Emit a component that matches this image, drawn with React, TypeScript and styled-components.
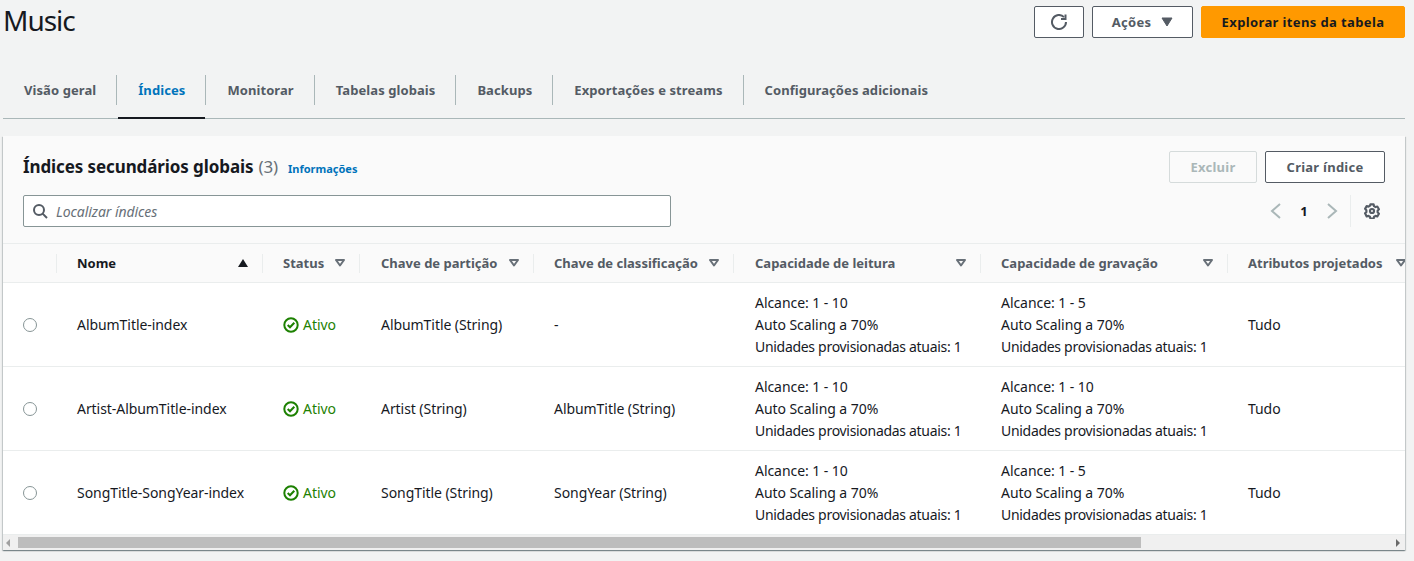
import React, { FC } from 'react';
import styled, { createGlobalStyle } from 'styled-components';

const GlobalStyle = createGlobalStyle`
  html, body {
    margin: 0;
    padding: 0;
    background: #f2f3f3;
    color: #16191f;
    font-family: "Noto Sans", "Open Sans", sans-serif;
    font-size: 14px;
    line-height: 22px;
  }
  * {
    box-sizing: border-box;
  }
`;

const Page = styled.div`
  width: 1414px;
  height: 561px;
  padding: 6px 9px 0 3px;
  overflow: hidden;
`;

const PageHeader = styled.header`
  display: flex;
  justify-content: space-between;
  align-items: flex-start;
  height: 69px;
`;

const Title = styled.h1`
  margin: -6px 0 0;
  font-size: 28px;
  line-height: 40px;
  font-weight: 400;
  letter-spacing: -1px;
`;

const Actions = styled.div`
  display: flex;
  gap: 8px;
`;

const Button = styled.button<{ $variant?: 'normal' | 'primary' | 'disabled'; $width: number }>`
  display: flex;
  align-items: center;
  justify-content: center;
  gap: 10px;
  width: ${(p) => p.$width}px;
  height: 32px;
  padding: 0;
  border-radius: 2px;
  border: 1px solid
    ${(p) =>
      p.$variant === 'primary' ? '#ff9900' : p.$variant === 'disabled' ? '#d5dbdb' : '#545b64'};
  background: ${(p) =>
    p.$variant === 'primary' ? '#ff9900' : p.$variant === 'disabled' ? '#fafafa' : '#ffffff'};
  color: ${(p) =>
    p.$variant === 'primary' ? '#16191f' : p.$variant === 'disabled' ? '#aab7b8' : '#545b64'};
  font: 700 13px/20px "Noto Sans", sans-serif;
  letter-spacing: ${(p) => (p.$variant === 'primary' ? '0.38px' : '0.25px')};
`;

const Tabs = styled.nav`
  display: flex;
  height: 44px;
  border-bottom: 1px solid #aab7b8;
`;

const Tab = styled.div`
  height: 44px;
`;

const TabLabel = styled.span<{ $active?: boolean; $first?: boolean }>`
  display: flex;
  align-items: center;
  height: 30px;
  padding: 0 20px 0 21px;
  border-left: ${(p) => (p.$first ? '0' : '1px solid #aab7b8')};
  color: ${(p) => (p.$active ? '#0073bb' : '#545b64')};
  font-size: 13px;
  font-weight: 700;
  letter-spacing: 0.08px;
`;

const ActiveTab = styled(Tab)`
  position: relative;
  &::after {
    content: '';
    position: absolute;
    left: 2px;
    right: 0;
    bottom: 0;
    height: 2px;
    background: #16191f;
  }
`;

const Card = styled.section`
  margin-top: 17px;
  height: 414px;
  background: #ffffff;
  box-shadow: 0 1px 1px 0 rgba(0, 28, 36, 0.3), 1px 1px 1px 0 rgba(0, 28, 36, 0.15),
    -1px 1px 1px 0 rgba(0, 28, 36, 0.15);
  overflow: hidden;
`;

const CardHead = styled.div`
  height: 108px;
  padding: 15px 20px 0;
  background: #fafafa;
  border-bottom: 1px solid #eaeded;
`;

const HeadRow = styled.div`
  display: flex;
  justify-content: space-between;
  align-items: flex-start;
  height: 44px;
`;

const Heading = styled.div`
  display: flex;
  align-items: baseline;
  gap: 10px;
  height: 32px;
  line-height: 32px;
`;

const HeadingText = styled.h2`
  margin: 0;
  font-size: 17px;
  font-weight: 700;
  letter-spacing: -0.1px;
`;

const Count = styled.span`
  margin-left: 5px;
  color: #687078;
  font-weight: 400;
`;

const InfoLink = styled.a`
  color: #0073bb;
  font-size: 11px;
  font-weight: 700;
`;

const FilterRow = styled.div`
  display: flex;
  justify-content: space-between;
  align-items: center;
`;

const SearchBox = styled.div`
  display: flex;
  align-items: center;
  gap: 8px;
  width: 648px;
  height: 32px;
  padding-left: 8px;
  background: #ffffff;
  border: 1px solid #879596;
  border-radius: 2px;
`;

const Placeholder = styled.span`
  margin-top: 2px;
  color: #687078;
  font-style: italic;
  font-size: 14px;
  letter-spacing: -0.06px;
`;

const Pager = styled.div`
  display: flex;
  align-items: center;
  height: 32px;
  padding-right: 5px;
`;

const PageNumber = styled.span`
  width: 40px;
  text-align: center;
  font-size: 13px;
  font-weight: 700;
`;

const PagerDivider = styled.div`
  width: 1px;
  height: 32px;
  margin: 0 13px 0 10px;
  background: #eaeded;
`;

const COLUMNS = '53px 206px 97px 174px 200px 247px 247px 193px';

const TableWrap = styled.div`
  width: 100%;
  height: 291px;
  overflow: hidden;
`;

const HeaderRow = styled.div`
  display: grid;
  grid-template-columns: ${COLUMNS};
  align-items: center;
  height: 39px;
  background: #fafafa;
  border-bottom: 1px solid #eaeded;
`;

const HeaderCell = styled.div<{ $sorted?: boolean; $indent: number }>`
  display: flex;
  align-items: center;
  justify-content: space-between;
  height: 19px;
  padding: 0 14px 0 ${(p) => p.$indent - 1}px;
  border-left: 1px solid #eaeded;
  color: ${(p) => (p.$sorted ? '#16191f' : '#545b64')};
  font-size: 13px;
  font-weight: 700;
  white-space: nowrap;
`;

const EmptyHeader = styled.div``;

const Row = styled.div`
  display: grid;
  grid-template-columns: ${COLUMNS};
  align-items: center;
  height: 84px;
  border-bottom: 1px solid #eaeded;
  letter-spacing: -0.06px;
`;

const Cell = styled.div<{ $indent: number }>`
  padding-left: ${(p) => p.$indent}px;
  white-space: nowrap;
`;

const TightLine = styled.span`
  letter-spacing: -0.3px;
`;

const RadioCell = styled.div`
  padding-left: 20px;
  display: flex;
`;

const Radio = styled.span`
  width: 14px;
  height: 14px;
  border: 1px solid #879596;
  border-radius: 50%;
  background: #ffffff;
`;

const Status = styled.span`
  display: flex;
  align-items: center;
  gap: 4px;
  color: #1d8102;
`;

const Scrollbar = styled.div`
  display: flex;
  align-items: center;
  height: 15px;
  padding: 0 5px 0 3px;
  background: #f0f0f0;
`;

const Arrow = styled.span<{ $right?: boolean }>`
  width: 0;
  height: 0;
  border-top: 4px solid transparent;
  border-bottom: 4px solid transparent;
  ${(p) => (p.$right ? 'border-left: 4px solid #6a6a6a;' : 'border-right: 4px solid #a0a0a0;')}
`;

const Track = styled.div`
  flex: 1;
  padding-left: 8px;
`;

const Thumb = styled.div`
  width: 1123px;
  height: 11px;
  background: #bdbdbd;
`;

const RefreshIcon: FC = () => (
  <svg width="16" height="16" viewBox="0 0 16 16" fill="none" stroke="#545b64" strokeWidth="2">
    <path d="M15 8a7 7 0 1 1-2-4.900" />
    <path d="M14.500 0.500v4.500h-4.500" />
  </svg>
);

const CaretFilled: FC = () => (
  <svg width="12" height="10" viewBox="0 0 12 10">
    <path d="M1 1h10L6 9z" fill="#545b64" stroke="#545b64" strokeWidth="1" strokeLinejoin="round" />
  </svg>
);

const SortIcon: FC<{ sorted?: boolean }> = ({ sorted }) =>
  sorted ? (
    <svg width="10" height="8" viewBox="0 0 10 8">
      <path d="M0 8h10L5 0z" fill="#16191f" />
    </svg>
  ) : (
    <svg width="10" height="8" viewBox="0 0 10 8" fill="none" stroke="#687078" strokeWidth="2">
      <path d="M1 1h8L5 6.500z" strokeLinejoin="round" />
    </svg>
  );

const SearchIcon: FC = () => (
  <svg width="16" height="16" viewBox="0 0 16 16" fill="none" stroke="#545b64" strokeWidth="2">
    <circle cx="7" cy="7" r="5" />
    <path d="M10.600 10.600L15 15" />
  </svg>
);

const Chevron: FC<{ right?: boolean }> = ({ right }) => (
  <svg width="16" height="16" viewBox="0 0 16 16" fill="none" stroke="#aab7b8" strokeWidth="2">
    <path d={right ? 'M4 1l8 7-8 7' : 'M12 1L4 8l8 7'} />
  </svg>
);

const GearIcon: FC = () => (
  <svg width="16" height="16" viewBox="0 0 18 18" fill="none" stroke="#545b64" strokeWidth="2.400">
    <circle cx="9" cy="9" r="2.300" />
    <path
      d="M7.200 1.500h3.600l.5 2.100 1.700 1 2-.6 1.800 3.100-1.500 1.500v1.900l1.500 1.500-1.800 3.100-2-.6-1.700 1-.5 2.100H7.200l-.5-2.100-1.700-1-2 .6L1.200 11.500l1.500-1.500V8.100L1.200 6.600 3 3.500l2 .6 1.700-1z"
      strokeLinejoin="round"
    />
  </svg>
);

const CheckIcon: FC = () => (
  <svg width="16" height="16" viewBox="0 0 16 16" fill="none" stroke="#1d8102" strokeWidth="2">
    <circle cx="8" cy="8" r="6.700" />
    <path d="M4.700 8l2.300 2.300 4.300-4.600" />
  </svg>
);

const TABS = [
  'Visão geral',
  'Índices',
  'Monitorar',
  'Tabelas globais',
  'Backups',
  'Exportações e streams',
  'Configurações adicionais',
];

const HEADERS = [
  { label: 'Nome', indent: 21 },
  { label: 'Status', indent: 21 },
  { label: 'Chave de partição', indent: 22 },
  { label: 'Chave de classificação', indent: 21 },
  { label: 'Capacidade de leitura', indent: 22 },
  { label: 'Capacidade de gravação', indent: 21 },
  { label: 'Atributos projetados', indent: 21 },
];

const INDEXES = [
  {
    name: 'AlbumTitle-index',
    partition: 'AlbumTitle (String)',
    sort: '-',
    read: '1 - 10',
    write: '1 - 5',
  },
  {
    name: 'Artist-AlbumTitle-index',
    partition: 'Artist (String)',
    sort: 'AlbumTitle (String)',
    read: '1 - 10',
    write: '1 - 10',
  },
  {
    name: 'SongTitle-SongYear-index',
    partition: 'SongTitle (String)',
    sort: 'SongYear (String)',
    read: '1 - 10',
    write: '1 - 5',
  },
];

const Capacity: FC<{ range: string; indent: number }> = ({ range, indent }) => (
  <Cell $indent={indent}>
    Alcance: {range}
    <br />
    Auto Scaling a 70%
    <br />
    <TightLine>Unidades provisionadas atuais: 1</TightLine>
  </Cell>
);

const App: FC = () => {
  return (
    <Page>
      <GlobalStyle />
      <PageHeader>
        <Title>Music</Title>
        <Actions>
          <Button $width={50} aria-label="Atualizar">
            <RefreshIcon />
          </Button>
          <Button $width={101}>
            Ações
            <CaretFilled />
          </Button>
          <Button $width={204} $variant="primary">
            Explorar itens da tabela
          </Button>
        </Actions>
      </PageHeader>

      <Tabs>
        {TABS.map((label, i) => {
          const Wrapper = i === 1 ? ActiveTab : Tab;
          return (
            <Wrapper key={label}>
              <TabLabel $first={i === 0} $active={i === 1}>
                {label}
              </TabLabel>
            </Wrapper>
          );
        })}
      </Tabs>

      <Card>
        <CardHead>
          <HeadRow>
            <Heading>
              <HeadingText>
                Índices secundários globais<Count>(3)</Count>
              </HeadingText>
              <InfoLink>Informações</InfoLink>
            </Heading>
            <Actions>
              <Button $width={88} $variant="disabled">
                Excluir
              </Button>
              <Button $width={120}>Criar índice</Button>
            </Actions>
          </HeadRow>
          <FilterRow>
            <SearchBox>
              <SearchIcon />
              <Placeholder>Localizar índices</Placeholder>
            </SearchBox>
            <Pager>
              <Chevron />
              <PageNumber>1</PageNumber>
              <Chevron right />
              <PagerDivider />
              <GearIcon />
            </Pager>
          </FilterRow>
        </CardHead>

        <TableWrap>
          <HeaderRow>
            <EmptyHeader />
            {HEADERS.map(({ label, indent }, i) => (
              <HeaderCell key={label} $sorted={i === 0} $indent={indent}>
                {label}
                <SortIcon sorted={i === 0} />
              </HeaderCell>
            ))}
          </HeaderRow>
          {INDEXES.map((row) => (
            <Row key={row.name}>
              <RadioCell>
                <Radio />
              </RadioCell>
              <Cell $indent={21}>{row.name}</Cell>
              <Cell $indent={21}>
                <Status>
                  <CheckIcon />
                  Ativo
                </Status>
              </Cell>
              <Cell $indent={22}>{row.partition}</Cell>
              <Cell $indent={21}>{row.sort}</Cell>
              <Capacity range={row.read} indent={22} />
              <Capacity range={row.write} indent={21} />
              <Cell $indent={21}>Tudo</Cell>
            </Row>
          ))}
        </TableWrap>

        <Scrollbar>
          <Arrow />
          <Track>
            <Thumb />
          </Track>
          <Arrow $right />
        </Scrollbar>
      </Card>
    </Page>
  );
};

export default App;
